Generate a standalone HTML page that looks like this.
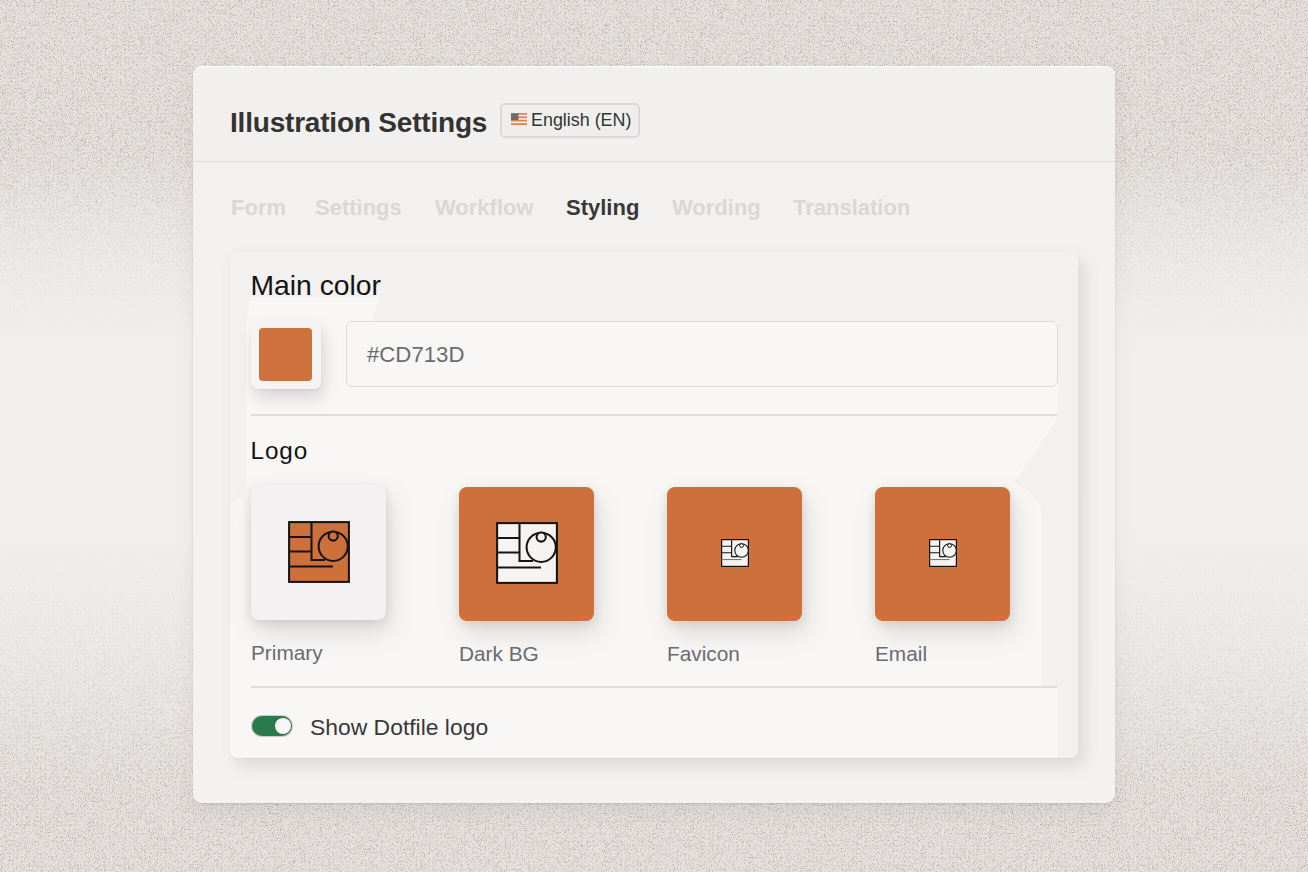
<!DOCTYPE html>
<html><head><meta charset="utf-8">
<style>
*{margin:0;padding:0;box-sizing:border-box}
html,body{width:1308px;height:872px;overflow:hidden}
body{position:relative;font-family:"Liberation Sans",sans-serif;
 background:#e5e1de;}
#noise{left:0;top:0;-webkit-mask-image:linear-gradient(to bottom,#000 0px,#000 150px,rgba(0,0,0,.4) 240px,rgba(0,0,0,0) 330px,rgba(0,0,0,0) 540px,rgba(0,0,0,.35) 660px,#000 790px,#000 872px)}
#glow{left:0;top:0;width:1308px;height:872px;background:linear-gradient(to bottom,rgba(243,241,238,0) 0px,rgba(243,241,238,0) 150px,rgba(243,241,238,.6) 260px,rgba(243,241,238,.9) 360px,rgba(243,241,238,.9) 520px,rgba(243,241,238,.55) 650px,rgba(243,241,238,0) 790px,rgba(243,241,238,0) 872px)}
.abs{position:absolute}
#card{left:193px;top:66px;width:922px;height:737px;border-radius:9px;background:linear-gradient(to bottom,#f1f0ee 0px,#f1f0ee 95px,#f3f1f0 96px,#f3f2f0 100%);
 box-shadow:inset 0 1px 0 rgba(255,255,255,.9), 0 1px 2px rgba(120,110,105,.22), 0 8px 20px rgba(120,110,105,.10)}
#title{left:230px;top:105.5px;font-size:28px;font-weight:bold;color:#333333;line-height:34px;letter-spacing:-0.2px;white-space:nowrap}
#pill{left:500px;top:103px;width:140px;height:35px;border:2px solid #ddd7d5;border-radius:5px;background:#f0eeec}
#pilltxt{left:531px;top:108.5px;font-size:17.9px;color:#2f3733;line-height:22px;white-space:nowrap}
#hr1{left:193px;top:160.5px;width:922px;height:1.5px;background:#e0dcd9}
.tab{position:absolute;top:195.3px;font-size:22px;font-weight:bold;color:#ddd6d4;line-height:26px;white-space:nowrap}
#inner{left:230px;top:252px;width:848px;height:506px;border-radius:7px;background:#f3f1f0;
 box-shadow:0 1px 1px rgba(110,100,95,.06), 6px 8px 16px rgba(110,100,95,.17)}
#light{left:230px;top:252px;width:848px;height:506px;background:#f8f7f6;border-radius:0 0 7px 7px;
 clip-path:polygon(20px 45px, 149px 45px, 142px 69px, 828px 69px, 828px 165px, 784px 230px, 800px 240px, 810px 253px, 812px 268px, 812px 436px, 828px 436px, 828px 506px, 0px 506px, 0px 253px, 16px 240px, 16px 78px)}
.h{position:absolute;color:#141414;white-space:nowrap}
#swbox{left:251px;top:320px;width:70px;height:69px;border-radius:7px;background:#f5f3f3;
 box-shadow:0 1px 2px rgba(110,100,95,.10), 3px 9px 15px rgba(110,100,95,.22)}
#sw{left:259px;top:328px;width:53px;height:53px;border-radius:4px;background:#cd713d}
#input{left:346px;top:321px;width:712px;height:66px;border:1.5px solid #dfdad8;border-radius:6px;background:#f8f7f6}
#inputtxt{left:367px;top:341.5px;font-size:22.2px;color:#6c6c6c;line-height:26px;white-space:nowrap}
.hr{position:absolute;height:1.5px;background:#e1dcda}
.tile{position:absolute;top:487px;width:135px;height:134px;border-radius:8px;
 box-shadow:0 3px 8px rgba(110,100,95,.16), 4px 12px 26px rgba(110,100,95,.20)}
.lab{position:absolute;top:641.5px;font-size:20.8px;color:#6a6b6e;line-height:22px;white-space:nowrap}
#toggle{left:252px;top:716px;width:40px;height:20px;border-radius:10px;background:#2a7b4c;box-shadow:0 0 0 1px rgba(100,60,60,.25)}
#knob{left:275px;top:718px;width:16px;height:16px;border-radius:8px;background:#f7f7f5}
#show{left:310px;top:714px;font-size:22.9px;color:#383838;line-height:26px;white-space:nowrap}
</style></head><body>
<div id="glow" class="abs"></div>
<svg id="noise" class="abs" width="1308" height="872">
<filter id="n" x="0" y="0" width="100%" height="100%" color-interpolation-filters="sRGB">
 <feTurbulence type="fractalNoise" baseFrequency="1.25" numOctaves="2" seed="3"/>
 <feColorMatrix type="matrix" values="0 0 0 0 0.60  0 0 0 0 0.57  0 0 0 0 0.555  2.2 0 0 0 -1.1"/>
</filter>
<rect width="1308" height="872" filter="url(#n)"/>
</svg>
<div id="card" class="abs"></div>
<div id="title" class="abs">Illustration Settings</div>
<div id="pill" class="abs"></div>
<svg class="abs" style="left:511px;top:113px" width="16" height="12" viewBox="0 0 16 12">
 <rect width="16" height="12" fill="#f3ece8"/>
 <rect y="0" width="16" height="1.7" fill="#e0844f"/>
 <rect y="3.4" width="16" height="1.7" fill="#e0844f"/>
 <rect y="6.8" width="16" height="1.7" fill="#e0844f"/>
 <rect y="10.2" width="16" height="1.8" fill="#e0844f"/>
 <rect y="0.5" width="7.5" height="6.5" fill="#6b6b72"/>
</svg>
<div id="pilltxt" class="abs">English (EN)</div>
<div id="hr1" class="abs"></div>
<div class="tab" style="left:231px">Form</div>
<div class="tab" style="left:315px">Settings</div>
<div class="tab" style="left:435px">Workflow</div>
<div class="tab" style="left:566px;color:#383838">Styling</div>
<div class="tab" style="left:672px">Wording</div>
<div class="tab" style="left:793px">Translation</div>

<div id="inner" class="abs"></div>
<div id="light" class="abs"></div>
<div class="h" style="left:250.5px;top:269px;font-size:28.3px;line-height:32px">Main color</div>
<div id="swbox" class="abs"></div>
<div id="sw" class="abs"></div>
<div id="input" class="abs"></div>
<div id="inputtxt" class="abs">#CD713D</div>
<div class="hr" style="left:251px;top:414px;width:806px"></div>
<div class="h" style="left:250.5px;top:437px;font-size:24.3px;line-height:28px;letter-spacing:0.9px">Logo</div>

<div class="tile" style="left:251px;top:485px;height:135px;background:#f3f1f1"></div>
<div class="tile" style="left:459px;background:#cd703c"></div>
<div class="tile" style="left:667px;background:#cd703c"></div>
<div class="tile" style="left:875px;background:#cd703c"></div>

<svg class="abs" style="left:288px;top:521px" width="62" height="62" viewBox="0 0 62 62">
 <g fill="none" stroke="#141414" stroke-width="2.05">
  <rect x="1.1" y="1.1" width="59.8" height="59.8" fill="#cd703c"/>
  <path d="M23.5 1V39H37M1 16H23.5M1 30.5H23.5M1 45.5H45"/>
  <circle cx="45.2" cy="25.3" r="14.6" fill="#cd703c"/>
  <circle cx="45.2" cy="15" r="4.6" fill="#cd703c"/>
 </g>
</svg>
<svg class="abs" style="left:496px;top:522px" width="62" height="62" viewBox="0 0 62 62">
 <g fill="none" stroke="#141414" stroke-width="2.05">
  <rect x="1.1" y="1.1" width="59.8" height="59.8" fill="#f5f4f3"/>
  <path d="M23.5 1V39H37M1 16H23.5M1 30.5H23.5M1 45.5H45"/>
  <circle cx="45.2" cy="25.3" r="14.6" fill="#f5f4f3"/>
  <circle cx="45.2" cy="15" r="4.6" fill="#f5f4f3"/>
 </g>
</svg>
<svg class="abs" style="left:721px;top:539px" width="28" height="28" viewBox="0 0 62 62">
 <g fill="none" stroke="#141414" stroke-width="2.6">
  <rect x="1.3" y="1.3" width="59.4" height="59.4" fill="#f5f4f3" stroke-width="2.8"/>
  <path d="M23.5 1V39H37M1 16H23.5M1 30.5H23.5"/>
  <path d="M1 45.5H45" stroke="#777" stroke-width="2.4"/>
  <circle cx="45.5" cy="25.5" r="15" fill="#f5f4f3" stroke-width="2.4"/>
  <circle cx="45.5" cy="14.6" r="4.2" fill="#f5f4f3" stroke-width="2.2"/>
 </g>
</svg>
<svg class="abs" style="left:929px;top:539px" width="28" height="28" viewBox="0 0 62 62">
 <g fill="none" stroke="#141414" stroke-width="2.6">
  <rect x="1.3" y="1.3" width="59.4" height="59.4" fill="#f5f4f3" stroke-width="2.8"/>
  <path d="M23.5 1V39H37M1 16H23.5M1 30.5H23.5"/>
  <path d="M1 45.5H45" stroke="#777" stroke-width="2.4"/>
  <circle cx="45.5" cy="25.5" r="15" fill="#f5f4f3" stroke-width="2.4"/>
  <circle cx="45.5" cy="14.6" r="4.2" fill="#f5f4f3" stroke-width="2.2"/>
 </g>
</svg>

<div class="lab" style="left:251px">Primary</div>
<div class="lab" style="left:459px;top:643px">Dark BG</div>
<div class="lab" style="left:667px;top:643px">Favicon</div>
<div class="lab" style="left:875px;top:643px">Email</div>
<div class="hr" style="left:251px;top:686px;width:806px"></div>
<div id="toggle" class="abs"></div>
<div id="knob" class="abs"></div>
<div id="show" class="abs">Show Dotfile logo</div>
</body></html>
